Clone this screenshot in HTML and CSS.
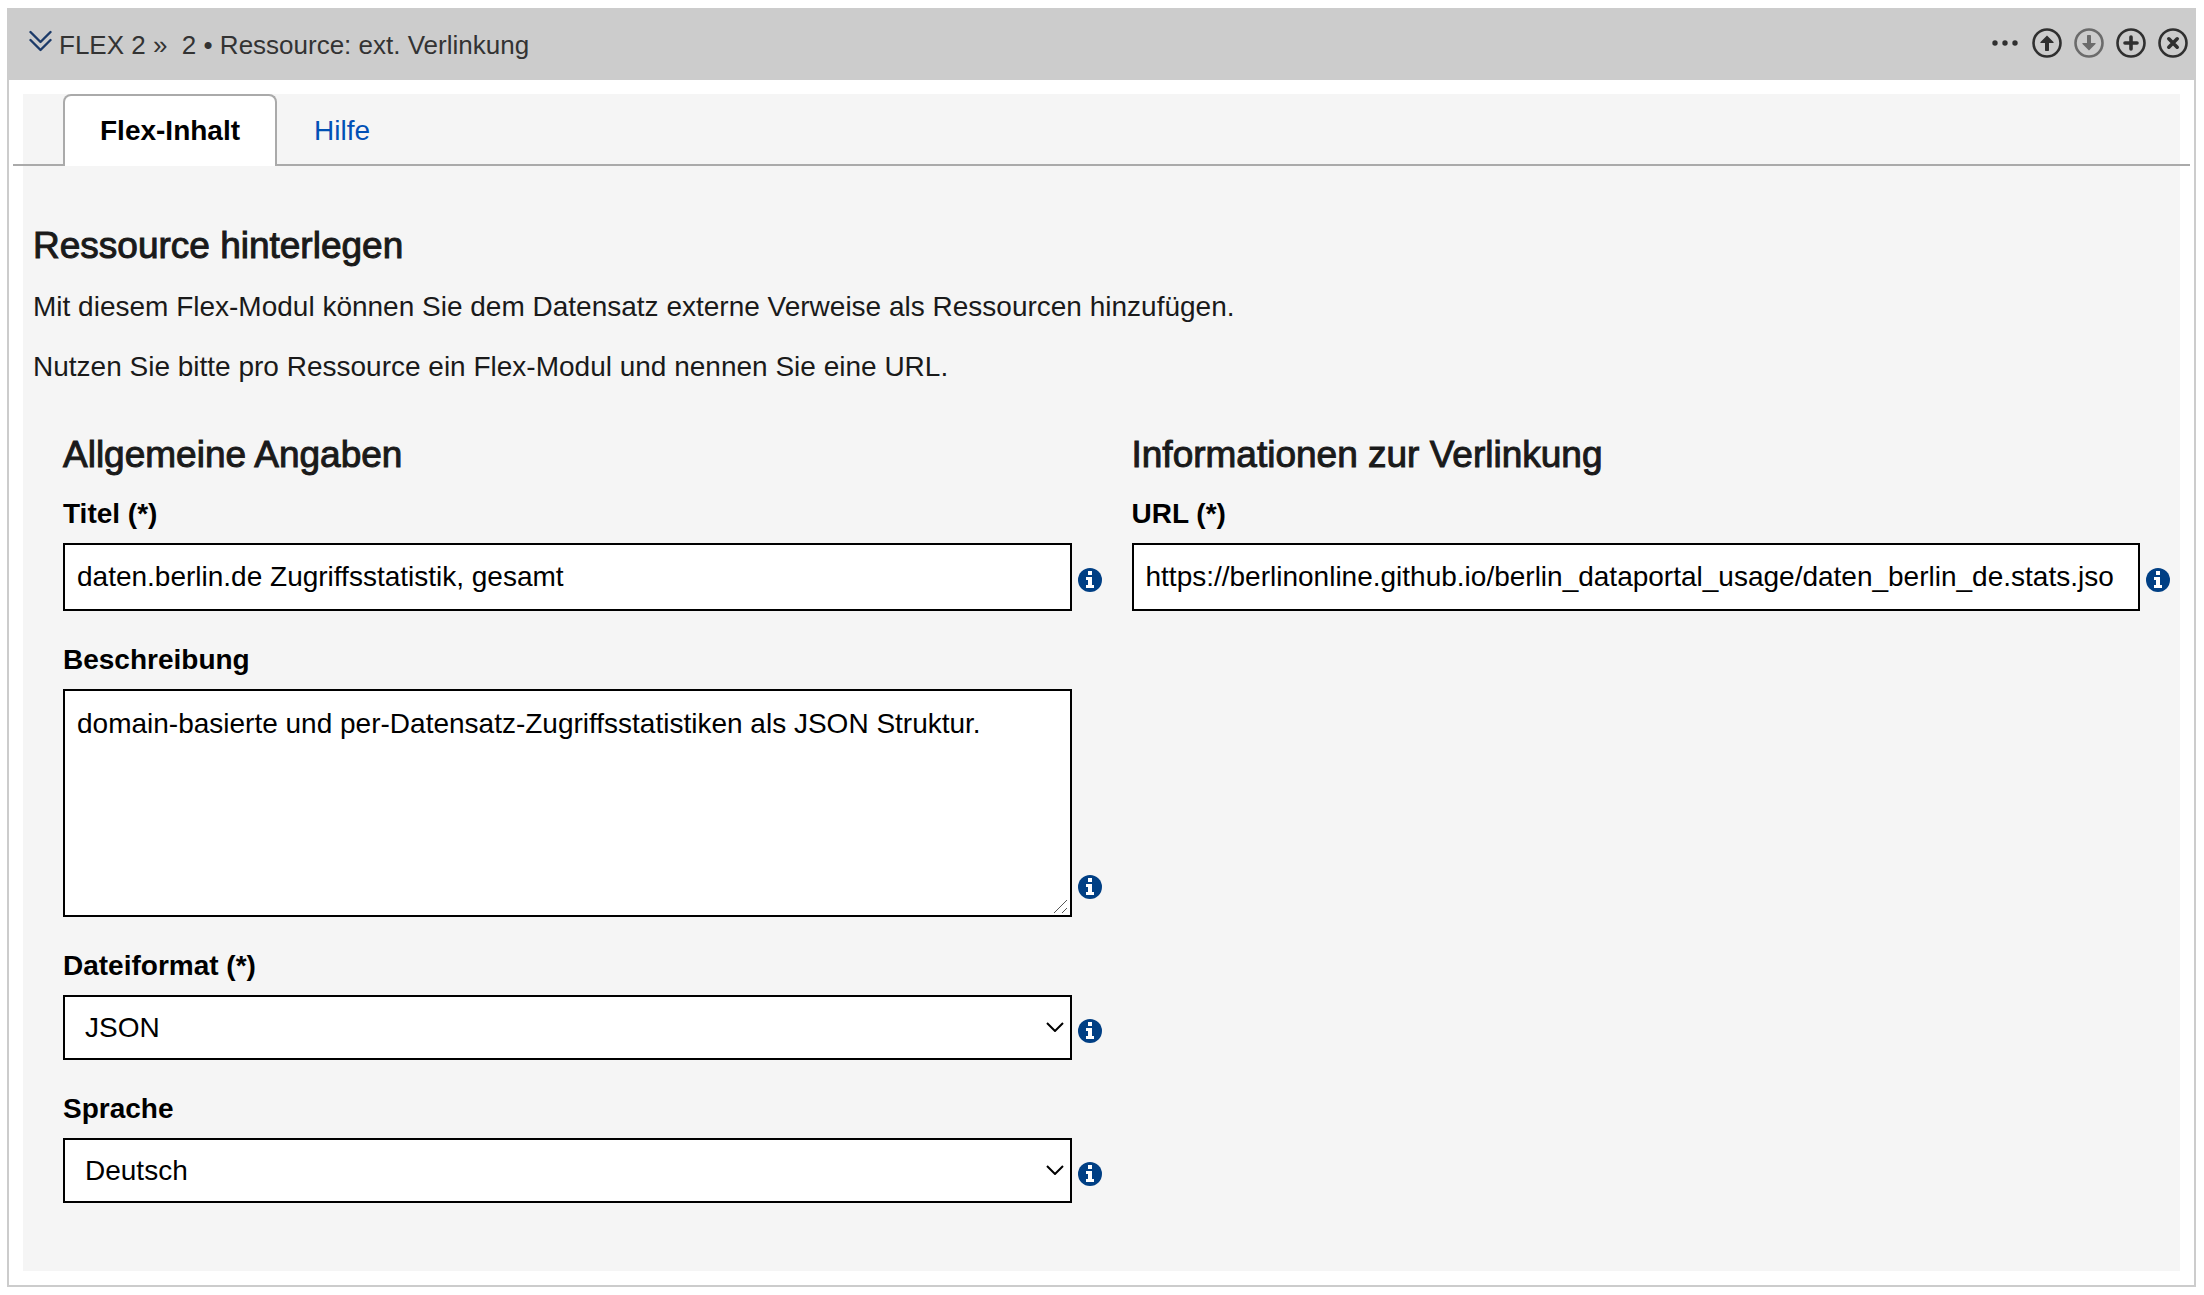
FILE: index.html
```html
<!DOCTYPE html>
<html lang="de">
<head>
<meta charset="utf-8">
<meta name="viewport" content="width=device-width, initial-scale=1">
<title>Ressource: ext. Verlinkung</title>
<link rel="stylesheet" href="styles.css">
</head>
<body>
<svg class="defs" aria-hidden="true">
  <symbol id="info" viewBox="0 0 24 24">
    <circle cx="12" cy="12" r="12" fill="#003f84"/>
    <path fill="#fff" d="M10 3h4v4h-4zM8 9h6v8h2v3H8v-3h2v-5H8z"/>
  </symbol>
</svg>
<main class="flex-module">
  <header class="module-head">
    <button type="button" class="icon-button toggle" aria-label="Einklappen">
      <svg width="23" height="22" viewBox="0 0 23 22" fill="none" stroke="#1b3a69" stroke-width="2.400" stroke-linecap="round" stroke-linejoin="round"><path d="M1.500 2l10 10 10-10M1.500 10l10 10 10-10"/></svg>
    </button>
    <span class="module-title">FLEX 2 »&nbsp; 2 • Ressource: ext. Verlinkung</span>
    <div class="actions">
      <button type="button" class="icon-button" aria-label="Mehr">
        <svg width="30" height="30" viewBox="0 0 30 30" fill="#303030"><circle cx="5" cy="15" r="2.700"/><circle cx="15" cy="15" r="2.700"/><circle cx="25" cy="15" r="2.700"/></svg>
      </button>
      <button type="button" class="icon-button" aria-label="Nach oben">
        <svg width="30" height="30" viewBox="0 0 30 30"><circle cx="15" cy="15" r="13.500" fill="none" stroke="#303030" stroke-width="2.600"/><path fill="#303030" d="M15 7.500l6.500 6.500c.4.600 0 1-.5 1h-4v7c0 .6-.4 1-1 1h-2c-.6 0-1-.4-1-1v-7H9c-.5 0-.9-.4-.5-1z"/></svg>
      </button>
      <button type="button" class="icon-button" aria-label="Nach unten" disabled>
        <svg width="30" height="30" viewBox="0 0 30 30"><circle cx="15" cy="15" r="13.500" fill="none" stroke="#6b6b6b" stroke-width="2.600"/><path fill="#6b6b6b" d="M15 22.500l6.500-6.500c.4-.6 0-1-.5-1h-4V8c0-.6-.4-1-1-1h-2c-.6 0-1 .4-1 1v7H9c-.5 0-.9.4-.5 1z"/></svg>
      </button>
      <button type="button" class="icon-button" aria-label="Hinzufügen">
        <svg width="30" height="30" viewBox="0 0 30 30" fill="none" stroke="#303030"><circle cx="15" cy="15" r="13.500" stroke-width="2.600"/><path stroke-width="3.600" stroke-linecap="round" d="M15 9v12M9 15h12"/></svg>
      </button>
      <button type="button" class="icon-button" aria-label="Entfernen">
        <svg width="30" height="30" viewBox="0 0 30 30" fill="none" stroke="#303030"><circle cx="15" cy="15" r="13.500" stroke-width="2.600"/><path stroke-width="3.600" stroke-linecap="round" d="M10.800 10.800l8.400 8.400M19.200 10.800l-8.400 8.400"/></svg>
      </button>
    </div>
  </header>

  <div class="module-body">
    <nav class="tabs">
      <a class="tab active" href="#inhalt">Flex-Inhalt</a>
      <a class="tab" href="#hilfe">Hilfe</a>
    </nav>

    <section class="intro" id="inhalt">
      <h2>Ressource hinterlegen</h2>
      <p>Mit diesem Flex-Modul können Sie dem Datensatz externe Verweise als Ressourcen hinzufügen.</p>
      <p>Nutzen Sie bitte pro Ressource ein Flex-Modul und nennen Sie eine URL.</p>
    </section>

    <form class="columns">
      <section class="column">
        <h2>Allgemeine Angaben</h2>
        <div class="field">
          <label for="titel">Titel (*)</label>
          <div class="control">
            <input id="titel" type="text" value="daten.berlin.de Zugriffsstatistik, gesamt">
            <svg class="info" role="img" aria-label="Info"><use href="#info"/></svg>
          </div>
        </div>
        <div class="field">
          <label for="beschreibung">Beschreibung</label>
          <div class="control control-area">
            <div class="area">
              <textarea id="beschreibung">domain-basierte und per-Datensatz-Zugriffsstatistiken als JSON Struktur.</textarea>
              <svg class="grip" viewBox="0 0 15 15" aria-hidden="true"><path d="M1 14L14 1M9 14l5-5"/></svg>
            </div>
            <svg class="info" role="img" aria-label="Info"><use href="#info"/></svg>
          </div>
        </div>
        <div class="field">
          <label for="format">Dateiformat (*)</label>
          <div class="control">
            <div class="select">
              <select id="format"><option>JSON</option></select>
              <svg class="chevron" viewBox="0 0 18 10" aria-hidden="true"><path d="M1 1l8 8 8-8"/></svg>
            </div>
            <svg class="info" role="img" aria-label="Info"><use href="#info"/></svg>
          </div>
        </div>
        <div class="field">
          <label for="sprache">Sprache</label>
          <div class="control">
            <div class="select">
              <select id="sprache"><option>Deutsch</option></select>
              <svg class="chevron" viewBox="0 0 18 10" aria-hidden="true"><path d="M1 1l8 8 8-8"/></svg>
            </div>
            <svg class="info" role="img" aria-label="Info"><use href="#info"/></svg>
          </div>
        </div>
      </section>

      <section class="column">
        <h2>Informationen zur Verlinkung</h2>
        <div class="field">
          <label for="url">URL (*)</label>
          <div class="control">
            <input id="url" type="text" value="https://berlinonline.github.io/berlin_dataportal_usage/daten_berlin_de.stats.jso">
            <svg class="info" role="img" aria-label="Info"><use href="#info"/></svg>
          </div>
        </div>
      </section>
    </form>
  </div>
</main>
</body>
</html>
```
FILE: styles.css
```css
* {
  box-sizing: border-box;
}

body {
  margin: 8px 8px 8px 7px;
  background: #fff;
  color: #1a1a1a;
  font: 28px/42px "Helvetica Neue", "Liberation Sans", Arial, sans-serif;
}

.defs {
  display: none;
}

.flex-module {
  border: 2px solid #ccc;
  border-top: 0;
}

.module-head {
  display: flex;
  align-items: center;
  gap: 7px;
  margin: 0 -2px;
  padding: 16px 8px 14px 22px;
  background: #ccc;
  color: #333;
  font-size: 26px;
}

.icon-button {
  display: block;
  padding: 0;
  border: 0;
  background: none;
}

.icon-button svg {
  display: block;
}

.toggle {
  padding-bottom: 8px;
}

.actions {
  display: flex;
  gap: 12px;
  margin-left: auto;
  padding-bottom: 4px;
}

.module-body {
  margin: 14px;
  padding-bottom: 68px;
  background: #f5f5f5;
}

.tabs {
  display: flex;
  margin: 0 -10px;
  padding: 0 50px;
  border-bottom: 2px solid #aaa;
}

.tab {
  margin-bottom: -2px;
  padding: 14px 35px;
  border: 2px solid transparent;
  border-bottom: 0;
  border-radius: 8px 8px 0 0;
  color: #0050b5;
  text-decoration: none;
}

.tab.active {
  border-color: #aaa;
  background: #fff;
  color: #000;
  font-weight: 700;
}

h2 {
  margin: 0;
  font-size: 37px;
  font-weight: 400;
  line-height: 48px;
  -webkit-text-stroke: 1px currentColor;
}

.intro {
  padding: 56px 10px 0;
}

.intro p {
  margin: 0 0 18px;
}

.intro h2 {
  margin-bottom: 16px;
}

.columns {
  display: grid;
  grid-template-columns: 1fr 1fr;
  gap: 30px;
  padding: 25px 10px 0 40px;
}

.column h2 {
  margin-bottom: 14px;
}

.field {
  margin-bottom: 28px;
}

.field:last-child {
  margin-bottom: 0;
}

label {
  display: block;
  margin-bottom: 8px;
  color: #000;
  font-weight: 700;
}

.control {
  display: flex;
  align-items: center;
  gap: 6px;
}

.info {
  flex: none;
  width: 24px;
  height: 24px;
  margin-top: 6px;
}

.control-area {
  align-items: flex-end;
}

.control-area .info {
  margin-bottom: 18px;
}

input,
textarea,
select {
  display: block;
  width: 100%;
  min-width: 0;
  margin: 0;
  border: 2px solid #000;
  border-radius: 0;
  background: #fff;
  color: #000;
  font: inherit;
}

input {
  padding: 11px 12px;
}

textarea {
  height: 228px;
  padding: 12px;
  resize: vertical;
}

textarea::-webkit-resizer {
  background: transparent;
}

.area,
.select {
  position: relative;
  flex: 1;
}

.grip {
  position: absolute;
  right: 4px;
  bottom: 3px;
  width: 15px;
  height: 15px;
  fill: none;
  stroke: #555;
  stroke-width: 1;
  pointer-events: none;
}

select {
  height: 65px;
  padding: 0 44px 0 20px;
  appearance: none;
}

.chevron {
  position: absolute;
  top: 27px;
  right: 8px;
  width: 18px;
  height: 10px;
  fill: none;
  stroke: #000;
  stroke-width: 2;
  pointer-events: none;
}
```
